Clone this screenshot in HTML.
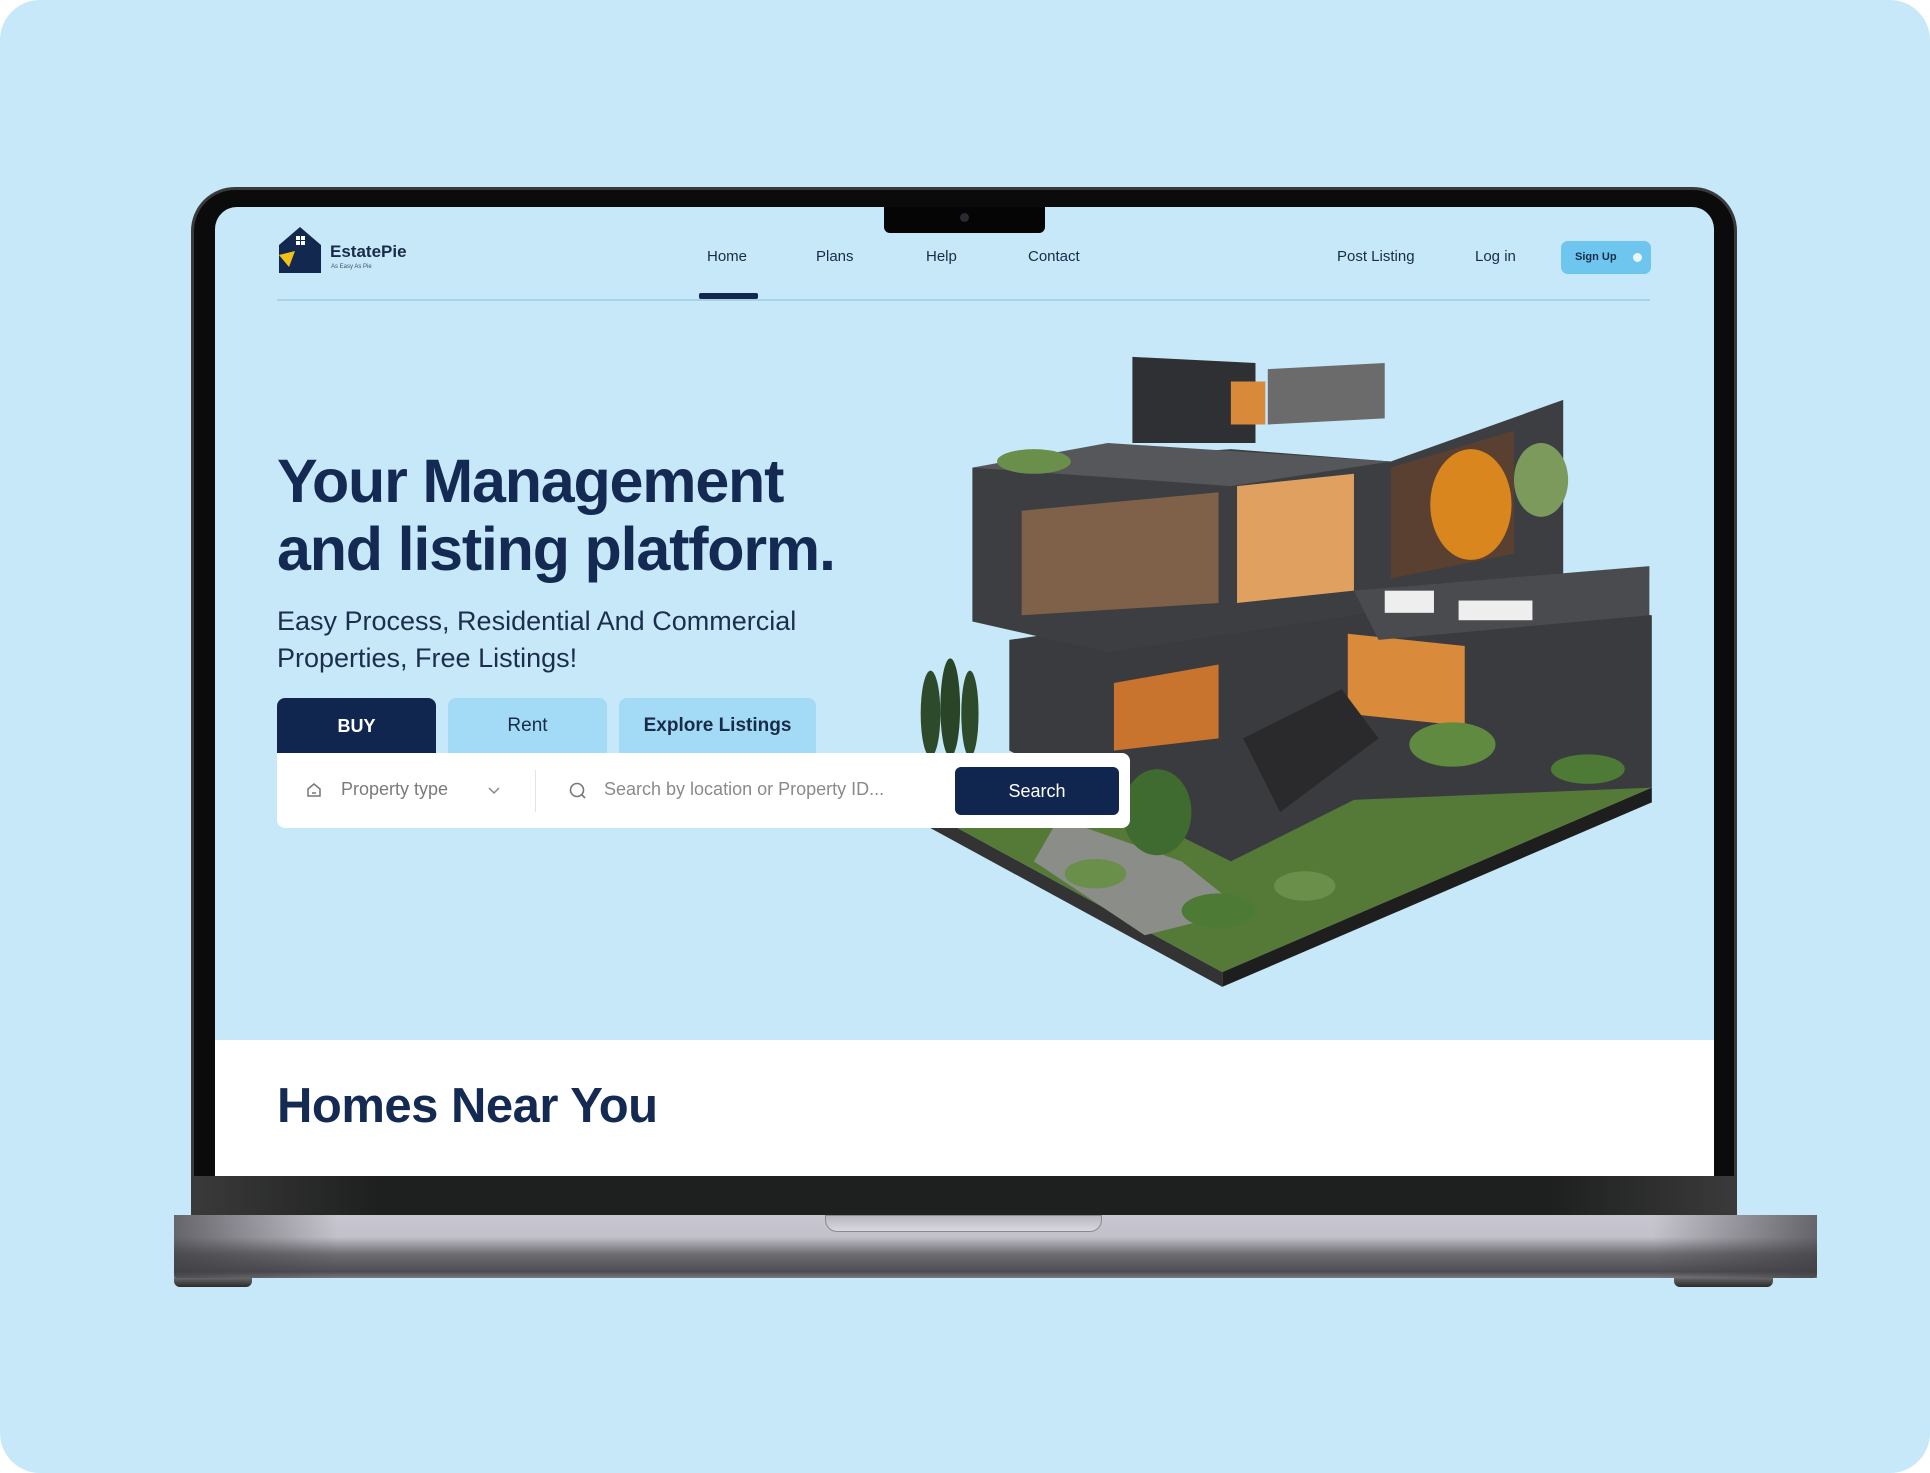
<!DOCTYPE html>
<html><head><meta charset="utf-8"><style>
*{margin:0;padding:0;box-sizing:border-box}
body{width:1930px;height:1473px;background:#fff;font-family:"Liberation Sans",sans-serif;position:relative;overflow:hidden}
.card{position:absolute;left:0;top:0;width:1930px;height:1473px;background:#c6e8f8;border-radius:40px}
.a{position:absolute}
.bezel{left:191px;top:187px;width:1546px;height:1032px;background:#0b0b0b;border-radius:44px 44px 0 0;border:3px solid #3a3a3c}
.screen{left:215px;top:207px;width:1499px;height:969px;background:#c6e8f8;border-radius:22px 22px 0 0;overflow:hidden}
.chin{left:194px;top:1176px;width:1540px;height:40px;background:linear-gradient(90deg,#3a3a3a,#1e1f1f 12%,#1e1f1f 88%,#3a3a3a)}
.base{left:174px;top:1215px;width:1643px;height:63px;background:linear-gradient(180deg,#c8c7d1 0%,#c2c1ca 35%,#6d6d72 62%,#4e4e52 90%,#7a7a80 100%);border-radius:0 0 4px 4px}
.basefade{left:174px;top:1215px;width:1643px;height:63px;background:linear-gradient(90deg,rgba(60,60,65,.7),rgba(0,0,0,0) 10%,rgba(0,0,0,0) 90%,rgba(60,60,65,.7))}
.bnotch{left:825px;top:1215px;width:277px;height:17px;background:linear-gradient(180deg,#b5b4bd,#dcdbe3);border-radius:0 0 12px 12px;box-shadow:inset 0 0 0 1px #8a8990}
.foot{top:1278px;height:9px;background:linear-gradient(180deg,#666,#2a2a2a);border-radius:0 0 6px 6px}
.nav{font-size:15px;color:#1a2b4a;top:248px}
</style></head><body>
<div class="card"></div>
<div class="a bezel"></div>
<div class="a screen">
  <div class="a" style="left:0;top:833px;width:1499px;height:136px;background:#fff"></div>
</div>
<div class="a" style="left:884px;top:207px;width:161px;height:26px;background:#050505;border-radius:0 0 6px 6px"></div>
<div class="a" style="left:960px;top:213px;width:9px;height:9px;background:#2a2a30;border-radius:50%"></div>
<div class="a chin"></div>
<div class="a base"></div><div class="a basefade"></div>
<div class="a bnotch"></div>
<div class="a foot" style="left:174px;width:78px"></div>
<div class="a foot" style="left:1674px;width:99px"></div>

<svg class="a" style="left:277px;top:225px" width="48" height="50" viewBox="0 0 48 50">
<path d="M2 20 L23 2 L44 20 L44 48 L2 48 Z" fill="#13284f"/>
<rect x="19" y="11" width="4" height="4" fill="#fff"/><rect x="24" y="11" width="4" height="4" fill="#fff"/><rect x="19" y="16" width="4" height="4" fill="#fff"/><rect x="24" y="16" width="4" height="4" fill="#fff"/>
<path d="M2 30 L18 26 L12 42 Z" fill="#f2c21b"/>
</svg>
<div class="a" style="left:330px;top:242px;font-size:17px;font-weight:bold;color:#1a2b4a">EstatePie</div>
<div class="a" style="left:331px;top:264px;font-size:6px;color:#44506a">As Easy As Pie</div>
<div class="a nav" style="left:707px">Home</div>
<div class="a nav" style="left:816px">Plans</div>
<div class="a nav" style="left:926px">Help</div>
<div class="a nav" style="left:1028px">Contact</div>
<div class="a nav" style="left:1337px">Post Listing</div>
<div class="a nav" style="left:1475px">Log in</div>
<div class="a" style="left:1561px;top:241px;width:90px;height:33px;background:#6ec6ee;border-radius:7px"></div>
<div class="a" style="left:1575px;top:251px;font-size:11px;color:#1a2b4a;font-weight:bold">Sign Up</div>
<div class="a" style="left:1633px;top:253px;width:9px;height:9px;background:#e8f6fd;border-radius:50%"></div>
<div class="a" style="left:277px;top:299px;width:1373px;height:2px;background:#a8d2e8"></div>
<div class="a" style="left:699px;top:293px;width:59px;height:6px;background:#13284f;border-radius:2px"></div>

<svg class="a" style="left:0;top:0" width="1930" height="1473" viewBox="0 0 1568 1197" preserveAspectRatio="none">
<polygon points="745,655 993,790 1342,640 1100,560" fill="#557a38"/>
<polygon points="745,655 993,790 993,802 745,667" fill="#333"/>
<polygon points="993,790 1342,640 1342,652 993,802" fill="#1e1e1e"/>
<polygon points="860,665 960,700 1010,740 930,760 840,700" fill="#8a8d88"/>
<polygon points="820,520 1100,480 1342,500 1342,640 1100,650 1000,700 820,610" fill="#3a3b3f"/>
<polygon points="905,555 990,540 990,600 905,610" fill="#c8742e"/>
<polygon points="1095,515 1190,525 1190,590 1095,580" fill="#d98a3a"/>
<polygon points="1010,600 1090,560 1120,600 1040,660" fill="#2a2a2c"/>
<polygon points="790,380 1000,365 1130,375 1270,325 1270,470 1100,500 900,530 790,505" fill="#3d3e42"/>
<polygon points="830,415 990,400 990,490 830,500" fill="#7e6148"/>
<polygon points="1005,395 1100,385 1100,480 1005,490" fill="#e0a060"/>
<polygon points="1130,380 1230,350 1230,450 1130,470" fill="#5a4030"/>
<polygon points="790,380 900,360 1130,375 1000,395" fill="#56575b"/>
<polygon points="920,290 1020,295 1020,360 920,360" fill="#2f3034"/>
<polygon points="1000,310 1028,310 1028,345 1000,345" fill="#d88a3a"/>
<polygon points="1030,300 1125,295 1125,340 1030,345" fill="#6b6b6b"/>
<polygon points="1100,480 1340,460 1340,500 1120,520" fill="#4a4b4f"/>
<rect x="1125" y="480" width="40" height="18" fill="#eee"/><rect x="1185" y="488" width="60" height="16" fill="#eee"/>
<ellipse cx="1195" cy="410" rx="33" ry="45" fill="#d9861f"/>
<ellipse cx="1252" cy="390" rx="22" ry="30" fill="#7c9a5c"/>
<ellipse cx="840" cy="375" rx="30" ry="10" fill="#6a8f4a"/>
<ellipse cx="756" cy="580" rx="8" ry="35" fill="#2d4a2a"/><ellipse cx="772" cy="575" rx="8" ry="40" fill="#2a4428"/><ellipse cx="788" cy="580" rx="7" ry="35" fill="#2d4a2a"/>
<ellipse cx="940" cy="660" rx="28" ry="35" fill="#3f6a30"/>
<ellipse cx="1180" cy="605" rx="35" ry="18" fill="#5f8a40"/>
<ellipse cx="890" cy="710" rx="25" ry="12" fill="#6a8f4a"/><ellipse cx="990" cy="740" rx="30" ry="14" fill="#4d7a35"/><ellipse cx="1060" cy="720" rx="25" ry="12" fill="#6a8f4a"/><ellipse cx="1290" cy="625" rx="30" ry="12" fill="#4d7a35"/>
</svg>

<div class="a" style="left:277px;top:447px;font-size:61px;font-weight:bold;color:#142a52;line-height:68px;letter-spacing:-1.2px">Your Management<br>and listing platform.</div>
<div class="a" style="left:277px;top:603px;font-size:27px;color:#1d2e4d;line-height:37px">Easy Process, Residential And Commercial<br>Properties, Free Listings!</div>

<div class="a" style="left:277px;top:698px;width:159px;height:56px;background:#10264f;border-radius:8px 8px 0 0;color:#fff;font-size:18px;font-weight:bold;text-align:center;line-height:56px">BUY</div>
<div class="a" style="left:448px;top:698px;width:159px;height:56px;background:#a3daf5;border-radius:8px 8px 0 0;color:#1a2b4a;font-size:19px;text-align:center;line-height:56px">Rent</div>
<div class="a" style="left:619px;top:698px;width:197px;height:56px;background:#a3daf5;border-radius:8px 8px 0 0;color:#1a2b4a;font-size:19px;font-weight:bold;text-align:center;line-height:56px">Explore Listings</div>

<div class="a" style="left:277px;top:753px;width:853px;height:75px;background:#fff;border-radius:0 8px 8px 8px"></div>
<svg class="a" style="left:305px;top:781px" width="18" height="18" viewBox="0 0 18 18"><path d="M3 8 L9 3 L15 8 L15 15 L3 15 Z" fill="none" stroke="#777" stroke-width="1.5"/><line x1="7" y1="12" x2="11" y2="12" stroke="#777" stroke-width="1.5"/></svg>
<div class="a" style="left:341px;top:779px;font-size:18px;color:#7a7a7a">Property type</div>
<svg class="a" style="left:487px;top:786px" width="14" height="10"><path d="M2 2 L7 7 L12 2" fill="none" stroke="#888" stroke-width="1.5"/></svg>
<div class="a" style="left:535px;top:770px;width:1px;height:42px;background:#e4e4e4"></div>
<svg class="a" style="left:568px;top:781px" width="20" height="20"><circle cx="9" cy="9" r="6.5" fill="none" stroke="#777" stroke-width="1.6"/><line x1="13.5" y1="13.5" x2="17" y2="17" stroke="#777" stroke-width="1.6"/></svg>
<div class="a" style="left:604px;top:779px;font-size:18px;color:#8a8a8a">Search by location or Property ID...</div>
<div class="a" style="left:955px;top:767px;width:164px;height:48px;background:#10264f;border-radius:6px;color:#fff;font-size:18px;text-align:center;line-height:48px">Search</div>

<div class="a" style="left:277px;top:1078px;font-size:49px;font-weight:bold;color:#142a52;letter-spacing:-0.5px">Homes Near You</div>
</body></html>
